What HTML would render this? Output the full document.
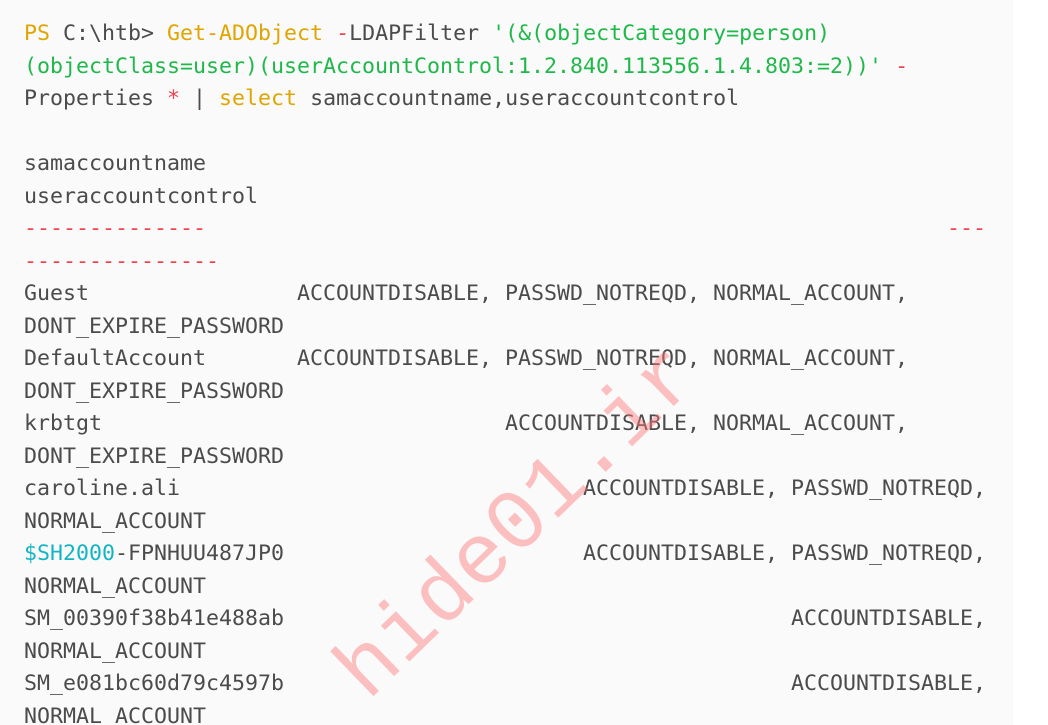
<!DOCTYPE html>
<html><head><meta charset="utf-8"><style>
html,body{margin:0;padding:0;background:#fff;width:1048px;height:725px;overflow:hidden;position:relative}
.box{position:absolute;left:0;top:0;width:1013px;height:725px;background:#fafafa}
pre{position:absolute;left:24px;top:18px;margin:0;font-family:"DejaVu Sans Mono","Liberation Mono",monospace;font-size:21.6px;line-height:32.5px;color:#4b4b4b}
.y{color:#e0a500}.r{color:#f0424e}.g{color:#1fb84a}.c{color:#12b5c4}
.wm{position:absolute;font-family:"Liberation Mono",monospace;font-size:86px;color:rgba(255,120,120,0.45);transform:rotate(-44deg);transform-origin:0 0;white-space:nowrap;line-height:1}
</style></head><body><div class="box"></div>
<pre><span class="y">PS</span> C:\htb&gt; <span class="y">Get-ADObject</span> <span class="r">-</span>LDAPFilter <span class="g">'(&amp;(objectCategory=person)</span>
<span class="g">(objectClass=user)(userAccountControl:1.2.840.113556.1.4.803:=2))'</span> <span class="r">-</span>
Properties <span class="r">*</span> | <span class="y">select</span> samaccountname,useraccountcontrol

samaccountname
useraccountcontrol
<span class="r">--------------                                                         ---</span>
<span class="r">---------------</span>
Guest                ACCOUNTDISABLE, PASSWD_NOTREQD, NORMAL_ACCOUNT,
DONT_EXPIRE_PASSWORD
DefaultAccount       ACCOUNTDISABLE, PASSWD_NOTREQD, NORMAL_ACCOUNT,
DONT_EXPIRE_PASSWORD
krbtgt                               ACCOUNTDISABLE, NORMAL_ACCOUNT,
DONT_EXPIRE_PASSWORD
caroline.ali                               ACCOUNTDISABLE, PASSWD_NOTREQD,
NORMAL_ACCOUNT
<span class="c">$SH2000</span>-FPNHUU487JP0                       ACCOUNTDISABLE, PASSWD_NOTREQD,
NORMAL_ACCOUNT
SM_00390f38b41e488ab                                       ACCOUNTDISABLE,
NORMAL_ACCOUNT
SM_e081bc60d79c4597b                                       ACCOUNTDISABLE,
NORMAL_ACCOUNT</pre>
<div class="wm" style="left:322px;top:654px">hide01.ir</div>
</body></html>
